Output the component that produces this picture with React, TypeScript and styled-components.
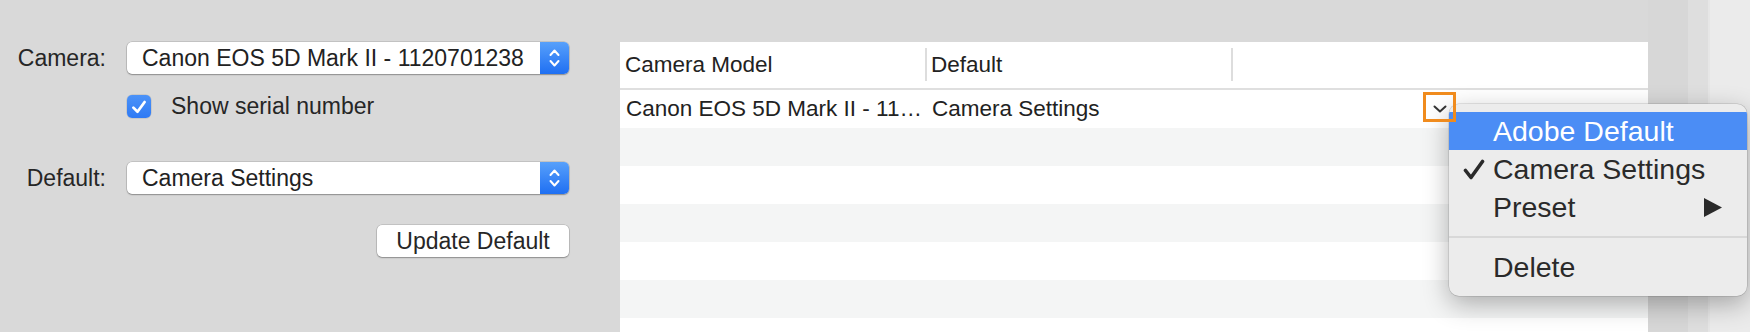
import React from 'react';
import styled, { createGlobalStyle } from 'styled-components';

const GlobalStyle = createGlobalStyle`
  html, body {
    margin: 0;
    padding: 0;
  }
  body {
    font-family: 'Liberation Sans', Arial, sans-serif;
    background: #d9d9d9;
    color: #262626;
  }
`;

const Window = styled.div`
  position: relative;
  display: flex;
  width: 1750px;
  height: 332px;
  overflow: hidden;
  background: #d9d9d9;
`;

const LeftPanel = styled.div`
  width: 620px;
  flex-shrink: 0;
  padding-top: 42px;
  box-sizing: border-box;
`;

const FormRow = styled.div<{ $mt: number; $h: number }>`
  display: flex;
  align-items: center;
  height: ${({ $h }) => $h}px;
  margin-top: ${({ $mt }) => $mt}px;
`;

const Label = styled.div`
  width: 106px;
  flex-shrink: 0;
  margin-right: 21px;
  text-align: right;
  font-size: 23px;
  color: #262626;
`;

const Control = styled.div<{ $end?: boolean }>`
  width: 442px;
  display: flex;
  align-items: center;
  justify-content: ${({ $end }) => ($end ? 'flex-end' : 'flex-start')};
`;

const PopUp = styled.div`
  width: 442px;
  height: 32px;
  display: flex;
  background: #ffffff;
  border-radius: 5px;
  overflow: hidden;
  box-shadow: 0 0 0 0.5px rgba(0, 0, 0, 0.2), 0 1px 1.5px rgba(0, 0, 0, 0.28);
`;

const PopUpText = styled.div`
  flex: 1;
  padding-left: 15px;
  font-size: 23px;
  line-height: 32px;
  white-space: nowrap;
  color: #222222;
`;

const Stepper = styled.div`
  width: 29px;
  display: flex;
  align-items: center;
  justify-content: center;
  background: linear-gradient(to bottom, #57a0fb, #1f6ff2);
`;

const CheckBox = styled.div`
  width: 24px;
  height: 23px;
  border-radius: 5px;
  background: linear-gradient(to bottom, #4b92f8, #2f7af4);
  display: flex;
  align-items: center;
  justify-content: center;
  box-shadow: 0 0 0 0.5px rgba(0, 0, 0, 0.15);
`;

const CheckLabel = styled.span`
  margin-left: 20px;
  font-size: 23px;
  color: #262626;
`;

const PushButton = styled.button`
  width: 192px;
  height: 32px;
  padding: 0;
  border: none;
  border-radius: 5px;
  background: #ffffff;
  font-family: 'Liberation Sans', Arial, sans-serif;
  font-size: 23px;
  color: #262626;
  box-shadow: 0 0 0 0.5px rgba(0, 0, 0, 0.2), 0 1px 1.5px rgba(0, 0, 0, 0.28);
`;

const TableArea = styled.div`
  margin-top: 42px;
  width: 1028px;
  flex-shrink: 0;
  background: #ffffff;
  font-size: 22.5px;
  color: #222222;
`;

const HeaderRow = styled.div`
  display: grid;
  grid-template-columns: 305px 306px 1fr;
  height: 48px;
  box-sizing: border-box;
  border-bottom: 2px solid #dfdfdf;
`;

const HeaderCell = styled.div<{ $divider?: boolean }>`
  align-self: start;
  margin-top: 6px;
  height: 33px;
  display: flex;
  align-items: center;
  padding-left: ${({ $divider }) => ($divider ? 4 : 5)}px;
  border-left: ${({ $divider }) => ($divider ? '2px solid #dddddd' : 'none')};
  white-space: nowrap;
`;

const DataRow = styled.div<{ $alt?: boolean }>`
  display: grid;
  grid-template-columns: 305px 306px 1fr;
  height: 38px;
  background: ${({ $alt }) => ($alt ? '#f4f5f5' : '#ffffff')};
`;

const DataCell = styled.div<{ $pad: number }>`
  display: flex;
  align-items: center;
  padding-left: ${({ $pad }) => $pad}px;
  white-space: nowrap;
  overflow: visible;
`;

const Anchor = styled.div`
  position: relative;
  align-self: start;
  margin-top: 2px;
`;

const TriggerBox = styled.div`
  position: relative;
  z-index: 3;
  width: 33px;
  height: 30px;
  box-sizing: border-box;
  border: 3px solid #f08b1d;
  display: flex;
  align-items: center;
  justify-content: center;
  padding-top: 3px;
`;

const Menu = styled.div`
  position: absolute;
  left: 26px;
  top: 12px;
  z-index: 2;
  width: 298px;
  padding: 8px 0 10px;
  background: #ececec;
  border-radius: 10px;
  overflow: hidden;
  font-size: 28.5px;
  color: #2a2a2a;
  box-shadow: 0 0 0 0.5px rgba(0, 0, 0, 0.18), 0 8px 26px rgba(0, 0, 0, 0.3);
`;

const MenuItem = styled.div<{ $active?: boolean }>`
  height: 38px;
  display: flex;
  align-items: center;
  padding: 0 25px 0 14px;
  background: ${({ $active }) => ($active ? '#4b8df5' : 'transparent')};
  color: ${({ $active }) => ($active ? '#ffffff' : '#2a2a2a')};
  white-space: nowrap;
`;

const CheckSlot = styled.span`
  width: 30px;
  flex-shrink: 0;
  display: flex;
  align-items: center;
`;

const MenuText = styled.span`
  flex: 1;
`;

const MenuSeparator = styled.div`
  height: 2px;
  margin: 10px 0;
  background: #d8d8d8;
`;

const Gutter = styled.div`
  width: 40px;
  flex-shrink: 0;
  background: #d7d7d7;
`;

const Strip = styled.div`
  width: 20px;
  flex-shrink: 0;
  background: #dedede;
  border-right: 2px solid #e6e6e6;
`;

const Pane = styled.div`
  flex: 1;
  background: #ebebeb;
`;

const StepperIcon = () => (
  <svg width="11" height="20" viewBox="0 0 11 20">
    <path d="M1.5 7 L5.5 2.5 L9.5 7" fill="none" stroke="#fff" strokeWidth="2" strokeLinecap="round" strokeLinejoin="round" />
    <path d="M1.5 13 L5.5 17.5 L9.5 13" fill="none" stroke="#fff" strokeWidth="2" strokeLinecap="round" strokeLinejoin="round" />
  </svg>
);

const TickIcon = ({ color, size }: { color: string; size: number }) => (
  <svg width={size} height={size} viewBox="0 0 16 16">
    <path d="M3.5 8.5 L6.8 11.8 L12.5 4" fill="none" stroke={color} strokeWidth="2.2" strokeLinecap="round" strokeLinejoin="round" />
  </svg>
);

const MenuCheck = () => (
  <svg width="22" height="21" viewBox="0 0 22 21">
    <path d="M2.5 11.5 L8 18.5 L19.5 2.5" fill="none" stroke="#2a2a2a" strokeWidth="3.6" strokeLinecap="round" strokeLinejoin="round" />
  </svg>
);

const Chevron = () => (
  <svg width="14" height="8" viewBox="0 0 14 8">
    <path d="M1.5 1.5 L7 6.5 L12.5 1.5" fill="none" stroke="#333" strokeWidth="2" strokeLinecap="round" strokeLinejoin="round" />
  </svg>
);

const SubmenuArrow = () => (
  <svg width="18" height="19" viewBox="0 0 18 19">
    <polygon points="0,0 18,9.5 0,19" fill="#2a2a2a" />
  </svg>
);

const emptyRows = [true, false, true, false, true, false];

const App = () => {
  return (
    <>
      <GlobalStyle />
      <Window>
        <LeftPanel>
          <FormRow $mt={0} $h={32}>
            <Label>Camera:</Label>
            <Control>
              <PopUp>
                <PopUpText>Canon EOS 5D Mark II - 1120701238</PopUpText>
                <Stepper>
                  <StepperIcon />
                </Stepper>
              </PopUp>
            </Control>
          </FormRow>
          <FormRow $mt={21} $h={23}>
            <Label />
            <Control>
              <CheckBox>
                <TickIcon color="#ffffff" size={20} />
              </CheckBox>
              <CheckLabel>Show serial number</CheckLabel>
            </Control>
          </FormRow>
          <FormRow $mt={44} $h={32}>
            <Label>Default:</Label>
            <Control>
              <PopUp>
                <PopUpText>Camera Settings</PopUpText>
                <Stepper>
                  <StepperIcon />
                </Stepper>
              </PopUp>
            </Control>
          </FormRow>
          <FormRow $mt={31} $h={32}>
            <Label />
            <Control $end>
              <PushButton>Update Default</PushButton>
            </Control>
          </FormRow>
        </LeftPanel>

        <TableArea>
          <HeaderRow>
            <HeaderCell>Camera Model</HeaderCell>
            <HeaderCell $divider>Default</HeaderCell>
            <HeaderCell $divider />
          </HeaderRow>
          <DataRow>
            <DataCell $pad={6}>Canon EOS 5D Mark II - 11…</DataCell>
            <DataCell $pad={7}>Camera Settings</DataCell>
            <DataCell $pad={192}>
              <Anchor>
                <TriggerBox>
                  <Chevron />
                </TriggerBox>
                <Menu>
                  <MenuItem $active>
                    <CheckSlot />
                    <MenuText>Adobe Default</MenuText>
                  </MenuItem>
                  <MenuItem>
                    <CheckSlot>
                      <MenuCheck />
                    </CheckSlot>
                    <MenuText>Camera Settings</MenuText>
                  </MenuItem>
                  <MenuItem>
                    <CheckSlot />
                    <MenuText>Preset</MenuText>
                    <SubmenuArrow />
                  </MenuItem>
                  <MenuSeparator />
                  <MenuItem>
                    <CheckSlot />
                    <MenuText>Delete</MenuText>
                  </MenuItem>
                </Menu>
              </Anchor>
            </DataCell>
          </DataRow>
          {emptyRows.map((alt, i) => (
            <DataRow key={i} $alt={alt}>
              <DataCell $pad={6} />
              <DataCell $pad={7} />
              <DataCell $pad={7} />
            </DataRow>
          ))}
        </TableArea>

        <Gutter />
        <Strip />
        <Pane />
      </Window>
    </>
  );
};

export default App;
